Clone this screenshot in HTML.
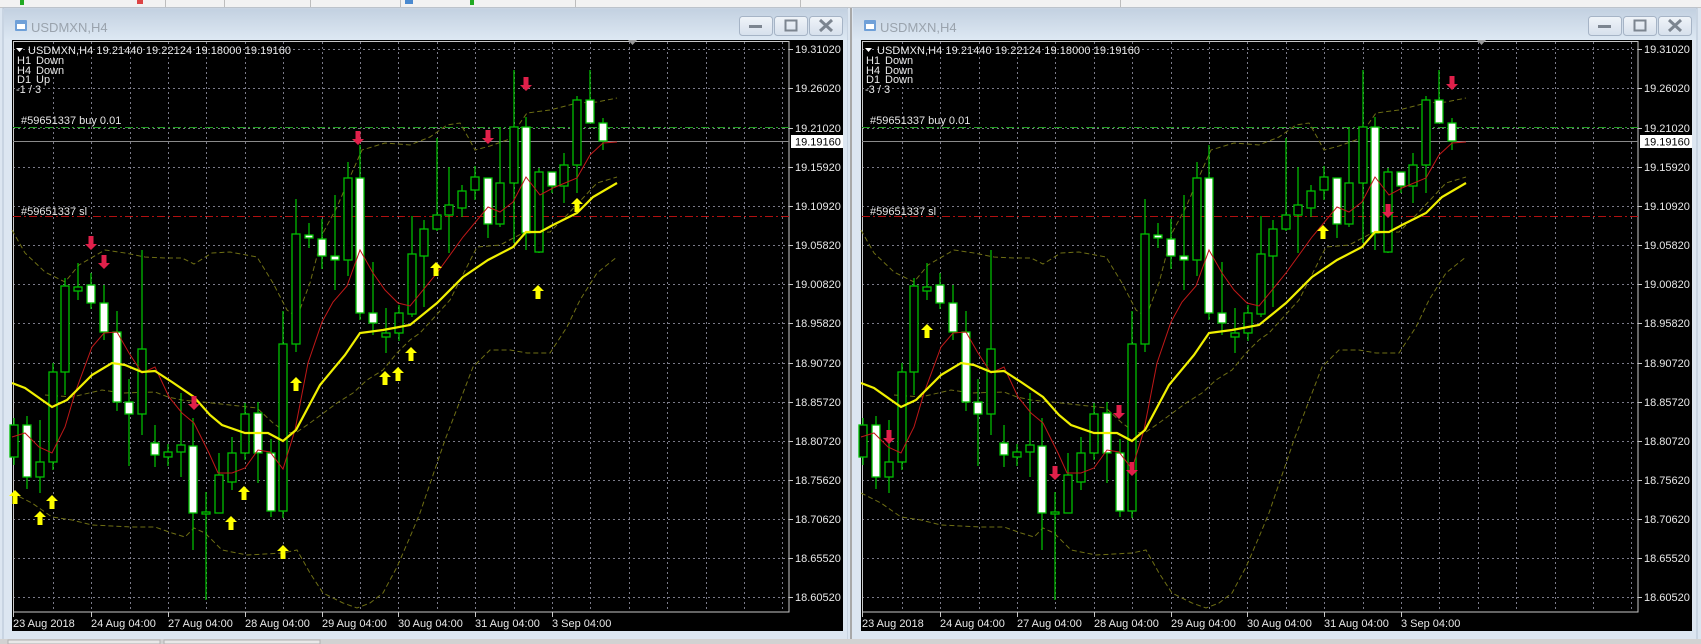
<!DOCTYPE html>
<html><head><meta charset="utf-8"><style>
html,body{margin:0;padding:0;background:#dce6f1;}
svg{display:block;}
text{font-family:"Liberation Sans",sans-serif;}
</style></head><body>
<svg width="1701" height="644" viewBox="0 0 1701 644" xmlns="http://www.w3.org/2000/svg">
<defs>
<linearGradient id="tb" x1="0" y1="0" x2="0" y2="1"><stop offset="0" stop-color="#c3d1e1"/><stop offset="1" stop-color="#dde8f3"/></linearGradient>
<linearGradient id="bt" x1="0" y1="0" x2="0" y2="1"><stop offset="0" stop-color="#f0f4f9"/><stop offset="1" stop-color="#d6e0ec"/></linearGradient>
<path id="up" d="M0,-7 L6,-1 L2.5,-1 L2.5,7 L-2.5,7 L-2.5,-1 L-6,-1 Z" fill="#ffff00"/>
<path id="dn" d="M0,7 L6,1 L2.5,1 L2.5,-7 L-2.5,-7 L-2.5,1 L-6,1 Z" fill="#e0204a"/>
<g id="btns">
<rect x="0.5" y="0.5" width="33" height="19" rx="3" fill="url(#bt)" stroke="#a6b4c6"/>
<rect x="10" y="9" width="13" height="3" fill="#7c8590"/>
<rect x="35.5" y="0.5" width="33" height="19" rx="3" fill="url(#bt)" stroke="#a6b4c6"/>
<rect x="46.5" y="4.5" width="11" height="10" fill="none" stroke="#7c8590" stroke-width="2"/>
<rect x="70.5" y="0.5" width="33" height="19" rx="3" fill="url(#bt)" stroke="#a6b4c6"/>
<path d="M81,4 L93,15 M93,4 L81,15" stroke="#7c8590" stroke-width="3"/>
</g>
<g id="win">
<rect x="3" y="8" width="845" height="632" fill="#dce6f1" stroke="#b4c2d2"/>
<rect x="4" y="9" width="843" height="31" fill="url(#tb)"/>
<rect x="15" y="20" width="12" height="11" rx="1" fill="#6fa0d8"/>
<rect x="17" y="24" width="8" height="5" fill="#fff"/>
<text x="31" y="32" font-size="13" fill="#9aa3ad">USDMXN,H4</text>
<use href="#btns" x="739" y="16"/>
<rect x="12" y="40" width="831" height="591" fill="#000"/>
<g stroke="#7a7a88" stroke-dasharray="2 3" stroke-width="1">
<path d="M53.5,42V612M91.5,42V612M130.5,42V612M168.5,42V612M206.5,42V612M245.5,42V612M283.5,42V612M322.5,42V612M360.5,42V612M398.5,42V612M437.5,42V612M475.5,42V612M514.5,42V612M552.5,42V612M590.5,42V612M629.5,42V612M667.5,42V612M706.5,42V612M744.5,42V612M782.5,42V612"/>
<path d="M13,49.5H789M13,88.5H789M13,128.5H789M13,167.5H789M13,206.5H789M13,245.5H789M13,284.5H789M13,323.5H789M13,363.5H789M13,402.5H789M13,441.5H789M13,480.5H789M13,519.5H789M13,558.5H789M13,597.5H789"/>
</g>
<rect x="13.5" y="41.5" width="775.5" height="570.5" fill="none" stroke="#c8c8c8"/>
<path d="M628,40 L637,40 L632.5,45 Z" fill="#9a9a9a"/>
<g stroke="#c8c8c8"><path d="M13.5,612V617M91.5,612V617M168.5,612V617M245.5,612V617M322.5,612V617M398.5,612V617M475.5,612V617M552.5,612V617M789,49.5h4M789,88.5h4M789,128.5h4M789,167.5h4M789,206.5h4M789,245.5h4M789,284.5h4M789,323.5h4M789,363.5h4M789,402.5h4M789,441.5h4M789,480.5h4M789,519.5h4M789,558.5h4M789,597.5h4"/></g>
<g font-size="11" fill="#e8e8e8">
<text x="795" y="53">19.31020</text><text x="795" y="92">19.26020</text><text x="795" y="132">19.21020</text><text x="795" y="171">19.15920</text><text x="795" y="210">19.10920</text><text x="795" y="249">19.05820</text><text x="795" y="288">19.00820</text><text x="795" y="327">18.95820</text><text x="795" y="367">18.90720</text><text x="795" y="406">18.85720</text><text x="795" y="445">18.80720</text><text x="795" y="484">18.75620</text><text x="795" y="523">18.70620</text><text x="795" y="562">18.65520</text><text x="795" y="601">18.60520</text>
<text x="13" y="627">23 Aug 2018</text><text x="91" y="627">24 Aug 04:00</text><text x="168" y="627">27 Aug 04:00</text><text x="245" y="627">28 Aug 04:00</text><text x="322" y="627">29 Aug 04:00</text><text x="398" y="627">30 Aug 04:00</text><text x="475" y="627">31 Aug 04:00</text><text x="552" y="627">3 Sep 04:00</text>
</g>
<path d="M13,127.5H789" stroke="#1f9a1f" stroke-dasharray="8 3 2 3"/>
<path d="M13,141.5H789" stroke="#8a8a8a"/>
<path d="M13,216.5H789" stroke="#b01010" stroke-dasharray="8 3 2 3"/>
<rect x="791" y="135" width="52" height="13" fill="#fff"/>
<text x="795" y="145.5" font-size="11" fill="#000">19.19160</text>
<g font-size="11" fill="#e8e8e8">
<text x="21" y="124">#59651337 buy 0.01</text>
<text x="21" y="215">#59651337 sl</text>
<path d="M16,48 L23,48 L19.5,52 Z" fill="#fff"/>
<text x="28" y="54" textLength="263">USDMXN,H4  19.21440 19.22124 19.18000 19.19160</text>
<text x="17" y="64">H1</text><text x="36" y="64">Down</text>
<text x="17" y="74">H4</text><text x="36" y="74">Down</text>
</g>
<g fill="none" stroke="#6e6e14" stroke-dasharray="5 3">
<polyline points="12,230 25,253 45,272 65,282 79,265 105,250 125,253 145,257 165,258 182,258 194,264 212,253 230,252 257,257 273,283 287,310 297,317 310,283 323,233 337,207 350,177 362,150 385,143 410,145 430,137 447,125 460,123 468,137 475,150 490,146 507,140 513,133 527,113 550,110 577,103 597,102 617,98"/>
<polyline points="45,395 72,397 102,390 122,393 155,392 168,397 182,400 212,403 230,405 257,408 273,423 287,433 297,432 310,423 337,403 353,393 367,380 383,370 397,353 410,340 420,333 450,300 477,247 500,245 523,233 550,232 567,215 583,198 597,183 617,177"/>
<polyline points="12,493 32,503 52,517 72,520 92,525 112,526 132,527 155,527 172,533 185,537 194,528 205,533 222,550 247,555 283,553 297,550 310,573 323,593 343,603 357,608 370,603 383,593 397,567 410,537 420,513 445,440 473,367 490,350 510,350 527,353 550,353 567,327 580,300 597,273 617,257"/>
</g>
<g stroke="#00c800" stroke-width="1.2">
<path d="M14,418V465M27,416V489M40,420V493M53,363V470M65,278V395M78,263V300M91,273V309M104,285V340M117,311V411M129,379V466M142,250V435M155,425V467M168,444V466M181,393V477M193,418V550M206,492V600M219,453V513M232,437V490M245,403V460M258,402V483M271,439V517M283,311V518M296,199V352M309,223V248M322,219V269M335,195V290M348,162V276M360,145V320M373,262V335M386,308V353M399,305V341M412,216V317M424,220V307M437,138V231M449,167V253M462,185V217M475,166V200M488,178V238M500,127V227M514,70V243M526,117V250M539,168V253M552,172V193M564,153V203M577,96V193M590,70V123M603,118V150"/>
</g>
<g stroke="#00c000" stroke-width="1.3">
<g fill="#000">
<rect x="10" y="425" width="8" height="32"/><rect x="36" y="462" width="8" height="15"/><rect x="49" y="372" width="8" height="90"/><rect x="61" y="286" width="8" height="86"/><rect x="74" y="287" width="8" height="4"/><rect x="138" y="349" width="8" height="65"/><rect x="164" y="452" width="8" height="5"/><rect x="177" y="445" width="8" height="7"/><rect x="202" y="512" width="8" height="2"/><rect x="215" y="475" width="8" height="38"/><rect x="228" y="453" width="8" height="29"/><rect x="241" y="414" width="8" height="39"/><rect x="279" y="344" width="8" height="167"/><rect x="292" y="234" width="8" height="110"/><rect x="344" y="178" width="8" height="82"/><rect x="382" y="333" width="8" height="4"/><rect x="395" y="313" width="8" height="20"/><rect x="408" y="254" width="8" height="60"/><rect x="420" y="229" width="8" height="27"/><rect x="433" y="215" width="8" height="14"/><rect x="445" y="205" width="8" height="10"/><rect x="458" y="191" width="8" height="17"/><rect x="471" y="177" width="8" height="13"/><rect x="496" y="183" width="8" height="41"/><rect x="510" y="127" width="8" height="56"/><rect x="535" y="172" width="8" height="80"/><rect x="560" y="165" width="8" height="21"/><rect x="573" y="100" width="8" height="65"/>
</g>
<g fill="#fff">
<rect x="23" y="425" width="8" height="52"/><rect x="87" y="285" width="8" height="18"/><rect x="100" y="303" width="8" height="29"/><rect x="113" y="332" width="8" height="70"/><rect x="125" y="402" width="8" height="12"/><rect x="151" y="443" width="8" height="12"/><rect x="189" y="446" width="8" height="67"/><rect x="254" y="413" width="8" height="40"/><rect x="267" y="453" width="8" height="58"/><rect x="305" y="235" width="8" height="3"/><rect x="318" y="239" width="8" height="17"/><rect x="331" y="256" width="8" height="4"/><rect x="356" y="178" width="8" height="135"/><rect x="369" y="313" width="8" height="10"/><rect x="484" y="178" width="8" height="46"/><rect x="522" y="127" width="8" height="106"/><rect x="548" y="172" width="8" height="14"/><rect x="586" y="100" width="8" height="23"/><rect x="599" y="123" width="8" height="18"/>
</g>
</g>
<polyline fill="none" stroke="#c01818" stroke-width="1" points="12,437 25,433 39,447 52,453 65,427 75,393 92,347 104,333 117,332 129,353 142,373 155,367 169,397 182,413 194,423 209,453 218,473 232,473 245,468 258,450 270,452 283,469 295,430 308,363 322,322 333,302 347,286 360,250 373,273 385,290 398,303 410,306 437,273 463,237 488,207 500,212 513,202 526,177 540,195 553,188 577,178 590,155 603,143 617,142"/>
<polyline fill="none" stroke="#f0f000" stroke-width="2.2" points="12,383 25,388 52,407 67,400 92,375 112,363 125,365 142,372 155,371 172,382 194,397 210,415 222,425 245,433 268,433 283,441 296,430 320,385 345,355 360,333 383,330 410,325 437,303 463,277 488,260 513,247 526,232 540,232 553,225 577,213 593,197 617,183"/>
</g>
</defs>

<rect x="0" y="0" width="1701" height="644" fill="#dce6f1"/>
<rect x="0" y="0" width="1701" height="7" fill="#f2f2f2"/>
<path d="M0,7.5H1701" stroke="#c4c4c4"/>
<g fill="#bdbdbd"><rect x="165" y="0" width="1" height="7"/><rect x="224" y="0" width="1" height="7"/><rect x="310" y="0" width="1" height="7"/><rect x="400" y="0" width="1" height="7"/><rect x="575" y="0" width="1" height="7"/><rect x="800" y="0" width="1" height="7"/><rect x="1120" y="0" width="1" height="7"/></g>
<rect x="20" y="0" width="4" height="5" fill="#22aa22"/><rect x="470" y="0" width="4" height="5" fill="#22aa22"/>
<rect x="137" y="0" width="6" height="4" fill="#d44"/><rect x="405" y="0" width="8" height="4" fill="#4a8ad0"/>

<use href="#win" x="0" y="0"/>
<use href="#win" x="849" y="0"/>
<rect x="848" y="8" width="5" height="636" fill="#dce6f1"/>
<rect x="850" y="8" width="2" height="636" fill="#a8a8a8"/>

<g font-size="11" fill="#e8e8e8">
<text x="17" y="83">D1</text><text x="36" y="83">Up</text>
<text x="16" y="93">-1 / 3</text>
</g>
<g>
<use href="#dn" x="91" y="243"/><use href="#dn" x="104" y="262"/><use href="#dn" x="194" y="403"/><use href="#dn" x="358" y="138"/><use href="#dn" x="488" y="137"/><use href="#dn" x="526" y="84"/>
<use href="#up" x="15" y="497"/><use href="#up" x="40" y="518"/><use href="#up" x="52" y="502"/><use href="#up" x="231" y="523"/><use href="#up" x="244" y="493"/><use href="#up" x="283" y="552"/><use href="#up" x="296" y="384"/><use href="#up" x="385" y="378"/><use href="#up" x="398" y="374"/><use href="#up" x="411" y="354"/><use href="#up" x="436" y="269"/><use href="#up" x="538" y="292"/><use href="#up" x="577" y="205"/>
</g>
<g font-size="11" fill="#e8e8e8">
<text x="866" y="83">D1</text><text x="885" y="83">Down</text>
<text x="865" y="93">-3 / 3</text>
</g>
<g transform="translate(849,0)">
<use href="#dn" x="40" y="437"/><use href="#dn" x="206" y="473"/><use href="#dn" x="270" y="412"/><use href="#dn" x="283" y="469"/><use href="#dn" x="539" y="211"/><use href="#dn" x="603" y="83"/>
<use href="#up" x="78" y="331"/><use href="#up" x="474" y="232"/>
</g>

<rect x="0" y="639" width="1701" height="5" fill="#d2d2d2"/>
<rect x="8" y="640" width="152" height="4" fill="#e8e8e8" stroke="#b0b0b0"/>
<rect x="164" y="640" width="156" height="4" fill="#e8e8e8" stroke="#b0b0b0"/>
</svg>
</body></html>
